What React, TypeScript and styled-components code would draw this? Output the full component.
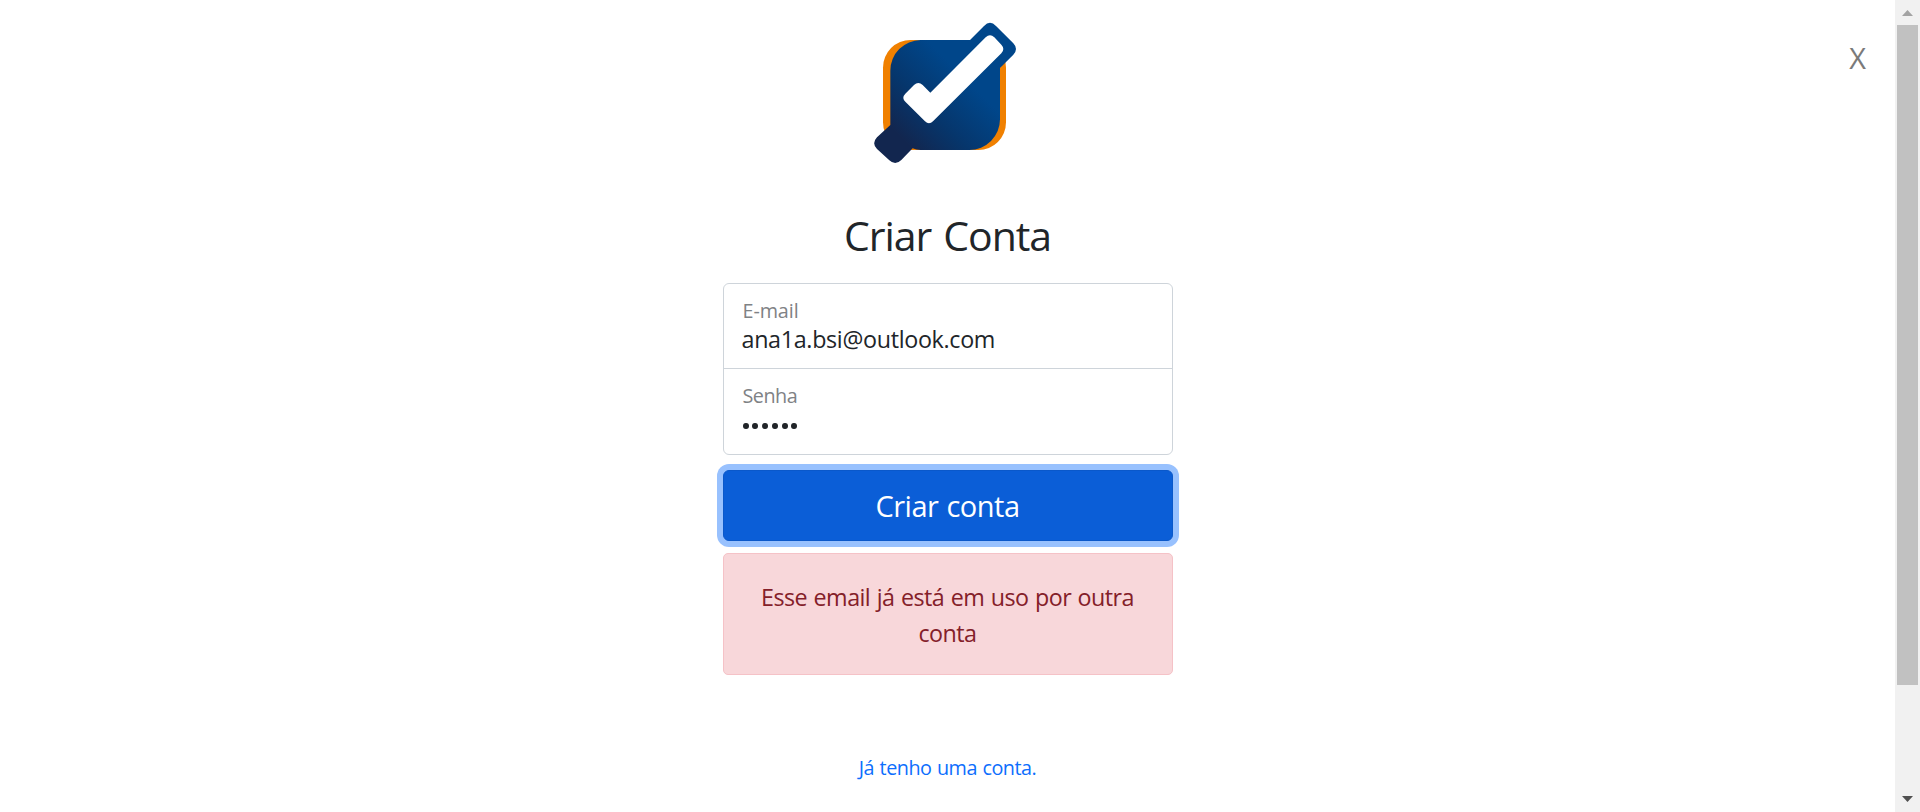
import React from "react";
import styled, { createGlobalStyle } from "styled-components";

const GlobalStyle = createGlobalStyle`
  *, *::before, *::after { box-sizing: border-box; }
  html, body { margin: 0; height: 812px; overflow: hidden; }
  body {
    background: #fff;
    color: #212529;
    font-family: "Segoe UI", "Open Sans", "Noto Sans", sans-serif;
    font-weight: 400;
  }
`;

const Page = styled.div`
  display: flex;
  height: 812px;
  overflow: hidden;
`;

const Content = styled.main`
  flex: 1;
  display: grid;
  grid-template-columns: 1fr 450px 1fr;
`;

const Side = styled.div`
  display: flex;
  justify-content: flex-end;
  align-items: flex-start;
  padding: 35px 29px 0 0;
`;

const CloseButton = styled.button`
  border: 0;
  padding: 0;
  background: none;
  color: #7a7a7a;
  font: 400 29px/45px "Open Sans", sans-serif;
`;

const Form = styled.form`
  display: flex;
  flex-direction: column;
  align-items: stretch;
  padding-top: 10px;
`;

const Logo = styled.svg`
  display: block;
  width: 170px;
  height: 165px;
  margin-left: 137px;
`;

const Title = styled.h1`
  margin: 35px 0 23px;
  font-size: 41px;
  font-weight: 400;
  line-height: 50px;
  letter-spacing: -1.05px;
  word-spacing: 2.5px;
  text-align: center;
`;

const Fields = styled.div`
  display: flex;
  flex-direction: column;
  height: 172px;
  border: 1px solid #ced4da;
  border-radius: 6px;
`;

const Field = styled.label`
  display: flex;
  flex-direction: column;
  height: 84px;
  padding: 13px 18px 0;

  & + & {
    height: 86px;
    border-top: 1px solid #ced4da;
  }
`;

const FieldLabel = styled.span<{ $spacing?: string }>`
  height: 27px;
  padding-left: 1px;
  color: #7f8285;
  font-size: 19.8px;
  line-height: 28px;
  letter-spacing: ${(p) => p.$spacing ?? "-0.5px"};
`;

const Input = styled.input`
  width: 100%;
  height: 30px;
  padding: 0;
  border: 0;
  outline: 0;
  background: transparent;
  color: #212529;
  font: 400 23.3px/30px "Open Sans", sans-serif;
  letter-spacing: -0.32px;
`;

const PasswordDots = styled.span`
  display: flex;
  gap: 3.8px;
  padding: 14px 0 0 1px;
`;

const Dot = styled.i`
  width: 6px;
  height: 6.4px;
  border-radius: 50%;
  background: #212529;
`;

const SubmitButton = styled.button`
  height: 71px;
  margin: 15px 0 0;
  padding: 1px 0 0;
  border: 1px solid #0a58ca;
  border-radius: 6px;
  background: #0b5ed7;
  box-shadow: 0 0 0 6px #98c1fe;
  color: #fff;
  font: 400 29px/44px "Open Sans", sans-serif;
  letter-spacing: -0.5px;
  word-spacing: 1px;
`;

const Alert = styled.div`
  height: 122px;
  margin-top: 12px;
  padding: 25px 24px;
  border: 1px solid #f5c2c7;
  border-radius: 5px;
  background: #f8d7da;
  color: #842029;
  font-size: 23.3px;
  line-height: 36px;
  letter-spacing: -0.55px;
  word-spacing: 1px;
  text-align: center;
`;

const LoginLink = styled.a`
  align-self: center;
  margin-top: 78px;
  color: #0d6efd;
  font-size: 19.8px;
  line-height: 30px;
  letter-spacing: -0.5px;
  word-spacing: 0.9px;
  text-decoration: none;
`;

const ScrollTrack = styled.div`
  display: flex;
  flex-direction: column;
  align-items: center;
  width: 25px;
  height: 812px;
  background: #f1f1f1;
`;

const ScrollThumb = styled.div`
  width: 21px;
  height: 660px;
  background: #c1c1c1;
`;

const ScrollArrow = styled.svg`
  width: 25px;
  height: 25px;

  ${ScrollThumb} + & {
    margin-top: auto;
  }
`;

export default function App() {
  return (
    <Page>
      <GlobalStyle />
      <Content>
        <Side />
        <Form onSubmit={(e) => e.preventDefault()}>
          <Logo viewBox="0 0 510 495" aria-hidden="true">
            <defs>
              <linearGradient id="badge" gradientUnits="userSpaceOnUse" x1="125" y1="385" x2="310" y2="200">
                <stop offset="0" stopColor="#12264f" />
                <stop offset="0.45" stopColor="#06366c" />
                <stop offset="1" stopColor="#00468a" />
              </linearGradient>
            </defs>
            <rect x="69" y="90" width="369" height="330" rx="83" fill="#f08000" />
            <path
              fill="url(#badge)"
              d="M182 90H330L372 48Q390 29 408 48L460 100Q476 117 460 134L420 174V328A92 92 0 0 1 328 420H182Q168 420 158 415L124 450Q106 468 88 451L51 417Q34 400 51 382L91 345V182A92 92 0 0 1 182 90Z"
            />
            <path
              fill="#fff"
              d="M211 248L377 82Q390 69 403 82L424 104Q436 117 424 130L219 334Q207 346 195 334L136 275Q124 263 136 251L162 225Q175 213 188 225Z"
            />
          </Logo>
          <Title>Criar Conta</Title>
          <Fields>
            <Field>
              <FieldLabel $spacing="-0.1px">E-mail</FieldLabel>
              <Input type="text" defaultValue="ana1a.bsi@outlook.com" spellCheck={false} />
            </Field>
            <Field>
              <FieldLabel>Senha</FieldLabel>
              <PasswordDots>
                {Array.from({ length: 6 }, (_, i) => (
                  <Dot key={i} />
                ))}
              </PasswordDots>
            </Field>
          </Fields>
          <SubmitButton type="submit">Criar conta</SubmitButton>
          <Alert role="alert">Esse email já está em uso por outra conta</Alert>
          <LoginLink href="#">Já tenho uma conta.</LoginLink>
        </Form>
        <Side>
          <CloseButton type="button">X</CloseButton>
        </Side>
      </Content>
      <ScrollTrack>
        <ScrollArrow viewBox="0 0 25 25">
          <path d="M7 16L12.5 10L18 16Z" fill="#a3a3a3" />
        </ScrollArrow>
        <ScrollThumb />
        <ScrollArrow viewBox="0 0 25 25">
          <path d="M7 9L12.5 15L18 9Z" fill="#505050" />
        </ScrollArrow>
      </ScrollTrack>
    </Page>
  );
}
